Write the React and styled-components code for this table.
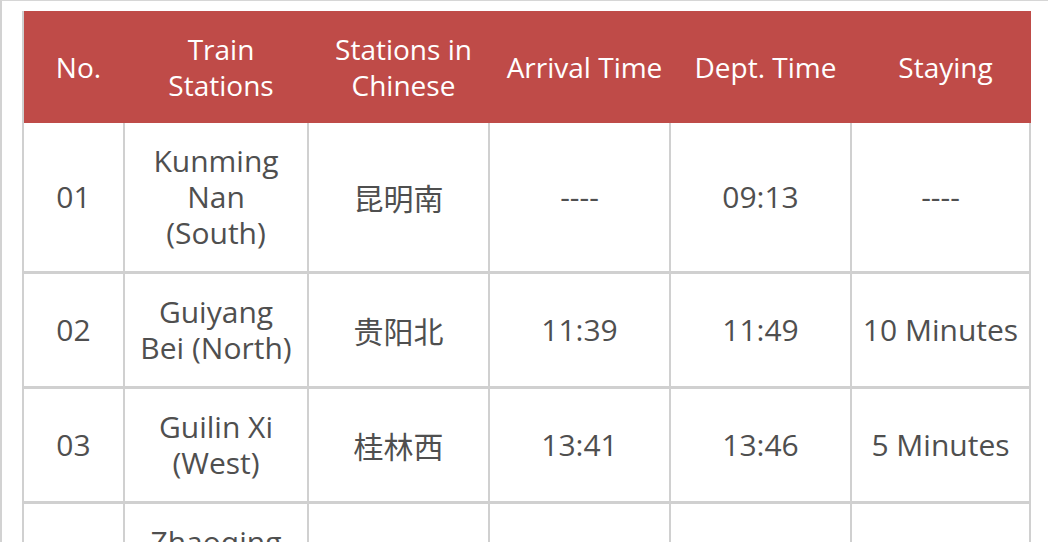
import React from "react";
import styled, { createGlobalStyle } from "styled-components";

const GlobalStyle = createGlobalStyle`
  html, body { margin: 0; padding: 0; background: #fff; }
  body { font-family: "Open Sans", "Noto Sans CJK SC", sans-serif; overflow: hidden; }
`;

const Page = styled.div`
  border-top: 1px solid #d6d6d6;
  border-left: 2px solid #d2d2d2;
  padding: 10px 0 0 20px;
  min-height: 600px;
`;

const COLS = "99px 182px 179px 179px 179px 177px";

const Table = styled.div`
  width: 1005px;
  display: flex;
  flex-direction: column;
  border-left: 2px solid #d0d0d0;
  border-right: 2px solid #d0d0d0;
`;

const HeaderRow = styled.div`
  display: grid;
  grid-template-columns: ${COLS};
  column-gap: 2px;
  background: #bf4b48;
  margin-right: -2px;
`;

const HeadCell = styled.div`
  padding: 20px 2px 20px 12px;
  color: #fff;
  font-size: 28px;
  line-height: 36px;
  text-align: center;
  display: flex;
  align-items: center;
  justify-content: center;
  white-space: nowrap;
`;

const Row = styled.div`
  display: grid;
  grid-template-columns: ${COLS};
  column-gap: 2px;
  background: #d0d0d0;
  border-top: ${(p) => (p.$first ? "0" : "3px solid #d0d0d0")};
`;

const Cell = styled.div`
  background: #fff;
  padding: 20px 6px;
  color: #4f4f4f;
  font-size: 30px;
  line-height: 36px;
  text-align: center;
  display: flex;
  align-items: center;
  justify-content: center;
  white-space: nowrap;
  font-family: ${(p) =>
    p.$cjk ? '"Noto Sans CJK SC", "Open Sans", sans-serif' : '"Open Sans", "Noto Sans CJK SC", sans-serif'};
`;

const headers = [
  ["No."],
  ["Train", "Stations"],
  ["Stations in", "Chinese"],
  ["Arrival Time"],
  ["Dept. Time"],
  ["Staying"],
];

const rows = [
  ["01", ["Kunming", "Nan", "(South)"], "昆明南", "----", "09:13", "----"],
  ["02", ["Guiyang", "Bei (North)"], "贵阳北", "11:39", "11:49", "10 Minutes"],
  ["03", ["Guilin Xi", "(West)"], "桂林西", "13:41", "13:46", "5 Minutes"],
  ["04", ["Zhaoqing", "Dong", "(East)"], "肇庆东", "16:30", "16:32", "2 Minutes"],
];

const Lines = ({ lines }) =>
  lines.map((l, i) => (
    <React.Fragment key={i}>
      {i > 0 && <br />}
      {l}
    </React.Fragment>
  ));

export default function App() {
  return (
    <>
      <GlobalStyle />
      <Page>
        <Table>
          <HeaderRow>
            {headers.map((h, i) => (
              <HeadCell key={i}>
                <span>
                  <Lines lines={h} />
                </span>
              </HeadCell>
            ))}
          </HeaderRow>
          {rows.map((r, i) => (
            <Row key={r[0]} $first={i === 0}>
              <Cell>{r[0]}</Cell>
              <Cell>
                <span>
                  <Lines lines={r[1]} />
                </span>
              </Cell>
              <Cell $cjk>{r[2]}</Cell>
              <Cell>{r[3]}</Cell>
              <Cell>{r[4]}</Cell>
              <Cell>{r[5]}</Cell>
            </Row>
          ))}
        </Table>
      </Page>
    </>
  );
}
